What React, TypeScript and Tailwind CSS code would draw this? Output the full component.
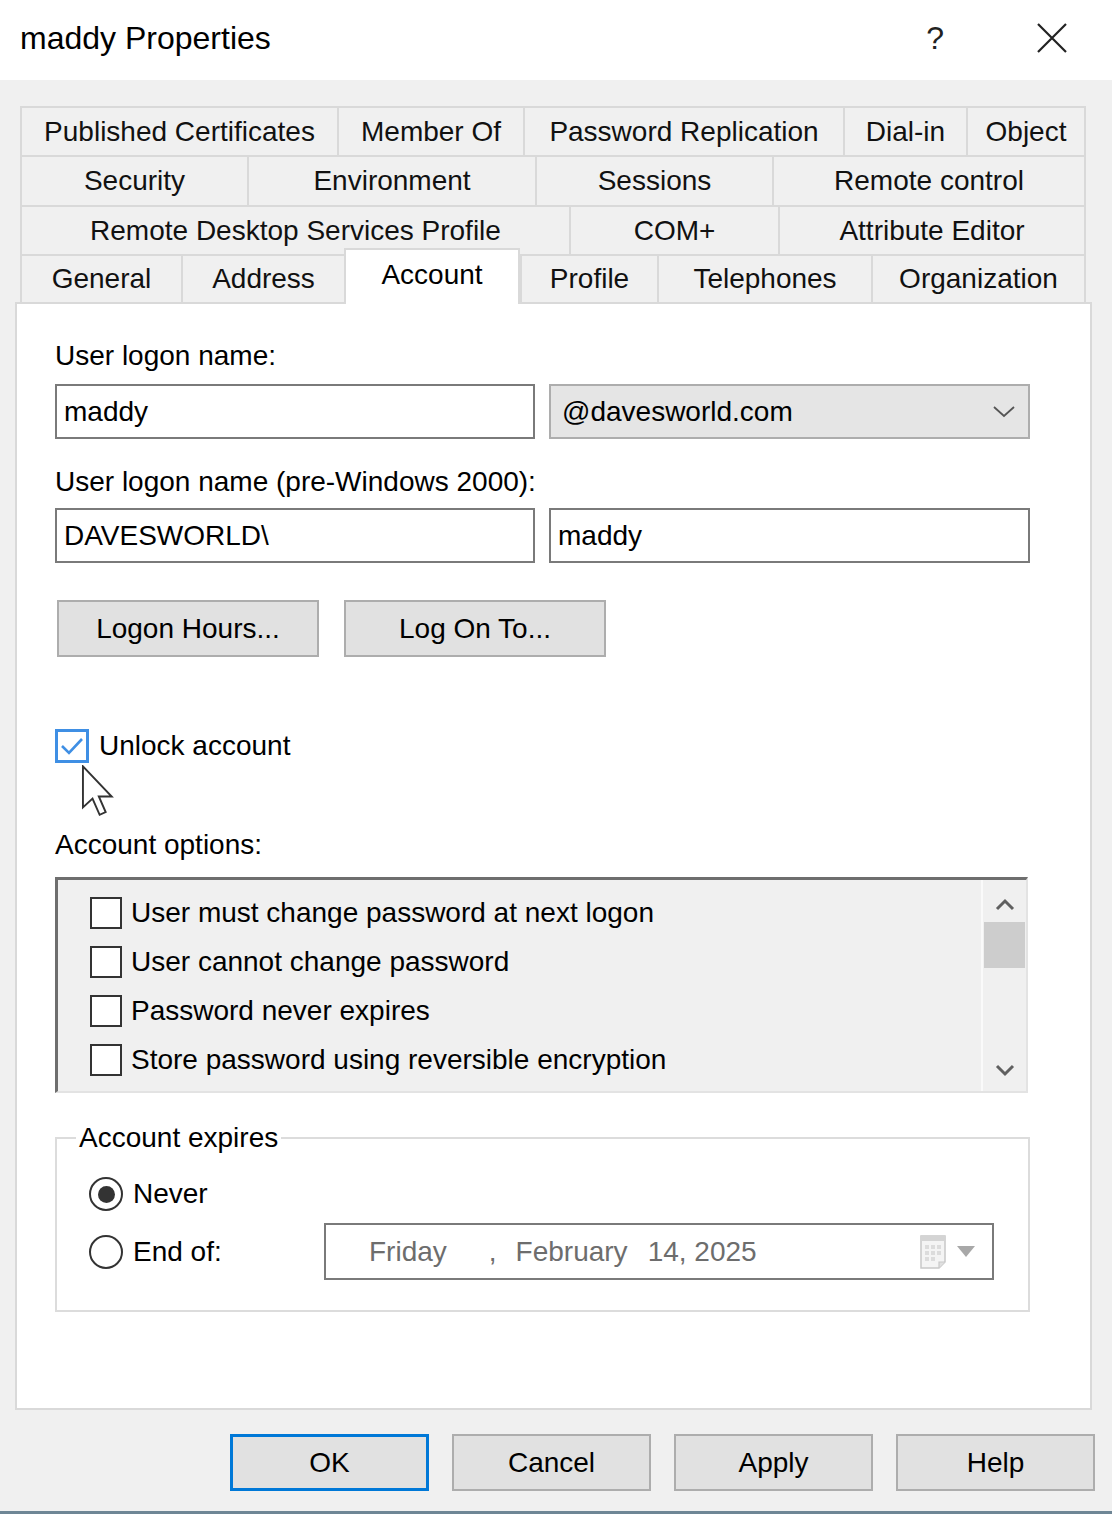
import React from "react";

type Tab = { label: string; w: string; active?: boolean };

const rows: { h: string; tabs: Tab[] }[] = [
  {
    h: "h-[49px]",
    tabs: [
      { label: "Published Certificates", w: "w-[317px]" },
      { label: "Member Of", w: "w-[186px]" },
      { label: "Password Replication", w: "w-[320px]" },
      { label: "Dial-in", w: "w-[123px]" },
      { label: "Object", w: "w-[120px]" },
    ],
  },
  {
    h: "h-[50px]",
    tabs: [
      { label: "Security", w: "w-[227px]" },
      { label: "Environment", w: "w-[288px]" },
      { label: "Sessions", w: "w-[237px]" },
      { label: "Remote control", w: "w-[314px]" },
    ],
  },
  {
    h: "h-[49px]",
    tabs: [
      { label: "Remote Desktop Services Profile", w: "w-[549px]" },
      { label: "COM+", w: "w-[209px]" },
      { label: "Attribute Editor", w: "w-[308px]" },
    ],
  },
  {
    h: "h-[48px]",
    tabs: [
      { label: "General", w: "w-[161px]" },
      { label: "Address", w: "w-[163px]" },
      { label: "Account", w: "w-[176px]", active: true },
      { label: "Profile", w: "w-[137px]" },
      { label: "Telephones", w: "w-[214px]" },
      { label: "Organization", w: "w-[215px]" },
    ],
  },
];

const options = [
  "User must change password at next logon",
  "User cannot change password",
  "Password never expires",
  "Store password using reversible encryption",
];

function Cursor() {
  return (
    <svg
      className="absolute left-[26px] top-[36px] w-[34px] h-[52px]"
      viewBox="0 0 12 19"
    >
      <path
        d="M0.5 0.5 L0.5 15.5 L4 12.3 L6.6 18.2 L8.8 17.2 L6.3 11.5 L11 11.5 Z"
        fill="#ffffff"
        stroke="#333333"
        strokeWidth="0.7"
        strokeLinejoin="miter"
      />
    </svg>
  );
}

export default function App() {
  return (
    <div className="w-[1112px] h-[1514px] flex flex-col bg-[#f0f0f0] font-['Liberation_Sans',Arial,sans-serif] text-black overflow-hidden">
      {/* Title bar */}
      <div className="h-[80px] bg-white flex items-center shrink-0">
        <div className="pl-[20px] text-[32px] leading-none -mt-[4px]">maddy Properties</div>
        <div className="ml-auto flex items-center">
          <div className="text-[32px] leading-none -mt-[4px] mr-[92px] text-[#222]">?</div>
          <svg className="w-[32px] h-[32px] mr-[44px] -mt-[4px]" viewBox="0 0 32 32">
            <path d="M2 2 L30 30 M30 2 L2 30" stroke="#222" strokeWidth="2.2" fill="none" />
          </svg>
        </div>
      </div>

      {/* Tabs */}
      <div className="pt-[26px] pl-[20px] flex flex-col">
        {rows.map((row, ri) => (
          <div key={ri} className={`${row.h} flex items-start`}>
            {row.tabs.map((t, ti) => {
              const last = ti === row.tabs.length - 1;
              if (t.active) {
                return (
                  <div
                    key={t.label}
                    className={`${t.w} relative z-10 -mt-[6px] h-[56px] bg-white border-t-2 border-l-2 border-r-2 border-[#d9d9d9] flex items-center justify-center text-[28px] leading-none`}
                  >
                    <span className="-mt-[4px]">{t.label}</span>
                  </div>
                );
              }
              return (
                <div
                  key={t.label}
                  className={`${t.w} h-full bg-[#f0f0f0] border-t-2 border-l-2 ${last ? "border-r-2" : ""} border-[#d9d9d9] flex items-center justify-center text-[28px] leading-none text-[#111]`}
                >
                  {t.label}
                </div>
              );
            })}
          </div>
        ))}
      </div>

      {/* Panel */}
      <div className="ml-[15px] w-[1077px] h-[1108px] bg-white border-2 border-[#d9d9d9] pl-[38px] pt-[36px] flex flex-col shrink-0">
        <div className="h-[32px] leading-[32px] text-[28px]">User logon name:</div>
        <div className="mt-[12px] flex gap-[14px]">
          <div className="w-[480px] h-[55px] border-2 border-[#7a7a7a] bg-white flex items-center pl-[7px] text-[28px]">
            maddy
          </div>
          <div className="w-[481px] h-[55px] border-2 border-[#adadad] bg-[#e5e5e5] flex items-center pl-[11px] pr-[12px] text-[28px]">
            <span>@davesworld.com</span>
            <svg className="ml-auto w-[24px] h-[14px]" viewBox="0 0 24 14">
              <path d="M2 2 L12 11 L22 2" stroke="#555" strokeWidth="1.8" fill="none" />
            </svg>
          </div>
        </div>

        <div className="mt-[27px] h-[32px] leading-[32px] text-[28px]">User logon name (pre-Windows 2000):</div>
        <div className="mt-[10px] flex gap-[14px]">
          <div className="w-[480px] h-[55px] border-2 border-[#7a7a7a] bg-white flex items-center pl-[7px] text-[28px]">
            DAVESWORLD\
          </div>
          <div className="w-[481px] h-[55px] border-2 border-[#7a7a7a] bg-white flex items-center pl-[7px] text-[28px]">
            maddy
          </div>
        </div>

        <div className="mt-[37px] ml-[2px] flex gap-[25px]">
          <div className="w-[262px] h-[57px] border-2 border-[#adadad] bg-[#e1e1e1] flex items-center justify-center text-[28px]">
            Logon Hours...
          </div>
          <div className="w-[262px] h-[57px] border-2 border-[#adadad] bg-[#e1e1e1] flex items-center justify-center text-[28px]">
            Log On To...
          </div>
        </div>

        <div className="mt-[72px] h-[34px] flex items-center gap-[10px] relative">
          <div className="w-[34px] h-[34px] border-[3px] border-[#3f8fe4] bg-white flex items-center justify-center">
            <svg className="w-[24px] h-[20px]" viewBox="0 0 24 20">
              <path d="M2 10 L9 17 L22 3" stroke="#3f8fe4" strokeWidth="2.6" fill="none" />
            </svg>
          </div>
          <span className="text-[28px] leading-none">Unlock account</span>
          <Cursor />
        </div>

        <div className="mt-[66px] h-[32px] leading-[32px] text-[28px]">Account options:</div>

        <div className="mt-[16px] w-[973px] h-[216px] bg-[#f0f0f0] border-t-[3px] border-l-[3px] border-r-2 border-b-2 border-t-[#6e6e6e] border-l-[#6e6e6e] border-r-[#e3e3e3] border-b-[#e3e3e3] flex">
          <div className="flex-1 pt-[8px] pl-[32px] flex flex-col">
            {options.map((o) => (
              <div key={o} className="h-[49px] flex items-center gap-[9px]">
                <div className="w-[32px] h-[32px] border-2 border-[#333] bg-white" />
                <span className="text-[28px] leading-none">{o}</span>
              </div>
            ))}
          </div>
          <div className="w-[45px] border-l-2 border-[#fafafa] bg-[#f0f0f0] flex flex-col items-center pt-[18px]">
            <svg className="w-[22px] h-[14px]" viewBox="0 0 22 14">
              <path d="M3 11 L11 3 L19 11" stroke="#606060" strokeWidth="3" fill="none" />
            </svg>
            <div className="mt-[10px] w-[41px] h-[46px] bg-[#cdcdcd]" />
            <svg className="mt-auto mb-[14px] w-[22px] h-[14px]" viewBox="0 0 22 14">
              <path d="M3 3 L11 11 L19 3" stroke="#606060" strokeWidth="3" fill="none" />
            </svg>
          </div>
        </div>

        <fieldset className="mt-[29px] w-[975px] border-2 border-[#dcdcdc] pl-[19px] pb-[30px] flex flex-col">
          <legend className="px-[3px] text-[28px] leading-[32px]">Account expires</legend>
          <div className="mt-[23px] h-[34px] ml-[13px] flex items-center gap-[10px]">
            <div className="w-[34px] h-[34px] rounded-full border-2 border-[#333] bg-white flex items-center justify-center">
              <div className="w-[17px] h-[17px] rounded-full bg-[#333]" />
            </div>
            <span className="text-[28px] leading-none">Never</span>
          </div>
          <div className="mt-[12px] h-[57px] ml-[13px] flex items-center">
            <div className="w-[235px] flex items-center gap-[10px]">
              <div className="w-[34px] h-[34px] rounded-full border-2 border-[#333] bg-white" />
              <span className="text-[28px] leading-none">End of:</span>
            </div>
            <div className="w-[670px] h-[57px] border-2 border-[#7a7a7a] bg-white flex items-center text-[28px] text-[#6d6d6d]">
              <span className="ml-[43px]">Friday</span>
              <span className="ml-[42px]">,</span>
              <span className="ml-[19px]">February</span>
              <span className="ml-[20px]">14, 2025</span>
              <svg className="ml-auto w-[30px] h-[36px]" viewBox="0 0 30 36">
                <path d="M2 2 H26 V28 L20 34 H2 Z" fill="#f4f4f4" stroke="#c8c8c8" strokeWidth="1.5" />
                <rect x="2" y="2" width="24" height="5" fill="#d4d4d4" />
                <g fill="#dcdcdc">
                  <rect x="6" y="11" width="4" height="4" />
                  <rect x="12" y="11" width="4" height="4" />
                  <rect x="18" y="11" width="4" height="4" />
                  <rect x="6" y="17" width="4" height="4" />
                  <rect x="12" y="17" width="4" height="4" />
                  <rect x="18" y="17" width="4" height="4" />
                  <rect x="6" y="23" width="4" height="4" />
                  <rect x="12" y="23" width="4" height="4" />
                </g>
                <path d="M20 34 V28 H26" fill="#e0e0e0" stroke="#c8c8c8" strokeWidth="1.2" />
              </svg>
              <svg className="ml-[8px] mr-[17px] w-[18px] h-[11px]" viewBox="0 0 18 11">
                <path d="M0 0 H18 L9 11 Z" fill="#a8a8a8" />
              </svg>
            </div>
          </div>
        </fieldset>
      </div>

      {/* Bottom buttons */}
      <div className="mt-[24px] pr-[17px] flex justify-end gap-[23px]">
        <div className="w-[199px] h-[57px] border-[3px] border-[#0078d7] bg-[#e1e1e1] flex items-center justify-center text-[28px]">
          OK
        </div>
        <div className="w-[199px] h-[57px] border-2 border-[#adadad] bg-[#e1e1e1] flex items-center justify-center text-[28px]">
          Cancel
        </div>
        <div className="w-[199px] h-[57px] border-2 border-[#adadad] bg-[#e1e1e1] flex items-center justify-center text-[28px]">
          Apply
        </div>
        <div className="w-[199px] h-[57px] border-2 border-[#adadad] bg-[#e1e1e1] flex items-center justify-center text-[28px]">
          Help
        </div>
      </div>
      <div className="mt-auto h-[3px] bg-[#6e8695]" />
    </div>
  );
}
